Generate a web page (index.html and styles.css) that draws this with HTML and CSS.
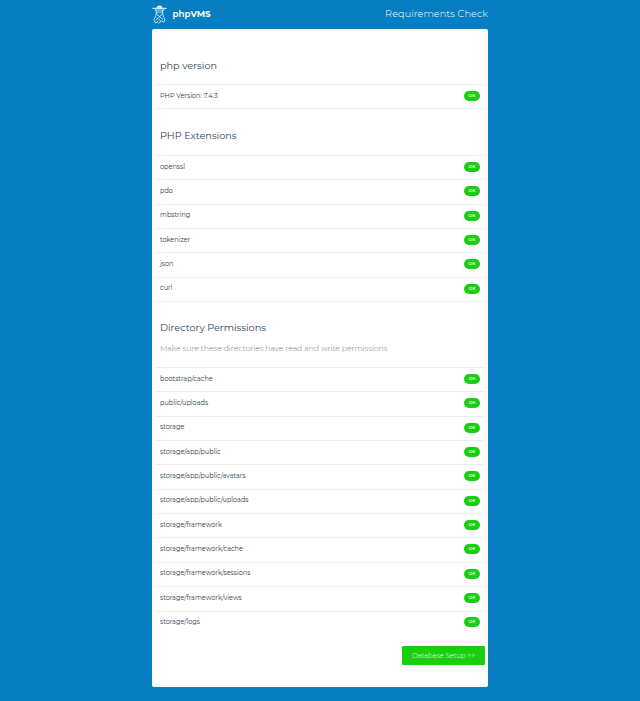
FILE: index.html
```html
<!DOCTYPE html>
<html lang="en">
<head>
  <meta charset="UTF-8">
  <meta name="viewport" content="width=device-width, initial-scale=1.0">
  <title>Requirements Check - phpVMS</title>
  <link rel="stylesheet" href="styles.css">
</head>
<body>
  <header class="navbar">
    <a class="brand" href="#">
      <svg class="logo" viewBox="0 0 16 20" fill="none" stroke="#fff" stroke-width="0.8" stroke-linecap="round" stroke-linejoin="round">
        <path d="M5.4 2.6 L6.4 1 H9.6 L10.6 2.6 Z" fill="#fff" />
        <path d="M0.8 3.4 H15.2" stroke-width="1" />
        <path d="M3.4 5.2 H12.6 M3.6 5.2 L5.2 7.4 H10.8 L12.4 5.2" />
        <path d="M4.6 7.4 L4.2 11.4 L2 15.8 L3.6 19 L6.2 17.6 M11.4 7.4 L11.8 11.4 L13.8 15.4 L12.6 18.2 L10.2 17" />
        <path d="M5 9.4 L11.4 15.2 M11 9.4 L4.6 15.6 M7.2 15 L9.6 17.4 L7.2 19.2" />
      </svg>
      <span class="brand-name">php<b>VMS</b></span>
    </a>
    <p class="page-title">Requirements Check</p>
  </header>
  <main class="card">
    <section class="php-version">
      <h4>php version</h4>
      <table class="table">
        <tr><td>PHP Version: 7.4.3</td><td class="status"><span class="badge">OK</span></td></tr>
      </table>
    </section>

    <section class="extensions">
      <h4>PHP Extensions</h4>
      <table class="table">
        <tr><td>openssl</td><td class="status"><span class="badge">OK</span></td></tr>
        <tr><td>pdo</td><td class="status"><span class="badge">OK</span></td></tr>
        <tr><td>mbstring</td><td class="status"><span class="badge">OK</span></td></tr>
        <tr><td>tokenizer</td><td class="status"><span class="badge">OK</span></td></tr>
        <tr><td>json</td><td class="status"><span class="badge">OK</span></td></tr>
        <tr><td>curl</td><td class="status"><span class="badge">OK</span></td></tr>
      </table>
    </section>

    <section class="directories">
      <h4>Directory Permissions</h4>
      <p class="description">Make sure these directories have read and write permissions</p>
      <table class="table">
        <tr><td>bootstrap/cache</td><td class="status"><span class="badge">OK</span></td></tr>
        <tr><td>public/uploads</td><td class="status"><span class="badge">OK</span></td></tr>
        <tr><td>storage</td><td class="status"><span class="badge">OK</span></td></tr>
        <tr><td>storage/app/public</td><td class="status"><span class="badge">OK</span></td></tr>
        <tr><td>storage/app/public/avatars</td><td class="status"><span class="badge">OK</span></td></tr>
        <tr><td>storage/app/public/uploads</td><td class="status"><span class="badge">OK</span></td></tr>
        <tr><td>storage/framework</td><td class="status"><span class="badge">OK</span></td></tr>
        <tr><td>storage/framework/cache</td><td class="status"><span class="badge">OK</span></td></tr>
        <tr><td>storage/framework/sessions</td><td class="status"><span class="badge">OK</span></td></tr>
        <tr><td>storage/framework/views</td><td class="status"><span class="badge">OK</span></td></tr>
        <tr><td>storage/logs</td><td class="status"><span class="badge">OK</span></td></tr>
      </table>
    </section>

    <div class="actions">
      <a class="button" href="#">Database Setup &gt;&gt;</a>
    </div>
  </main>
</body>
</html>
```

FILE: styles.css
```css
body {
  margin: 0;
  background-color: #067ec1;
  color: #2c3e50;
  font-family: Montserrat, Inter, "Liberation Sans", sans-serif;
}

.navbar {
  display: flex;
  justify-content: space-between;
  align-items: center;
  width: 336px;
  height: 29px;
  margin: 0 auto;
  color: white;
}

.brand {
  display: flex;
  align-items: center;
  color: white;
  text-decoration: none;
}

.logo {
  width: 15px;
  height: 19px;
  margin-right: 5.5px;
}

.brand-name {
  font-size: 8.7px;
  line-height: 10px;
  padding-bottom: 1px;
  font-weight: 600;
}

.brand-name b {
  font-weight: 700;
}

.page-title {
  margin: 0;
  padding-bottom: 2px;
  font-size: 9.7px;
  font-weight: 300;
  letter-spacing: 0.08px;
}

.card {
  box-sizing: border-box;
  width: 336px;
  height: 658px;
  margin: 0 auto;
  padding: 27px 2px 0 3px;
  background-color: white;
  border-radius: 2px;
}

h4 {
  margin: 0;
  padding-left: 5px;
  font-size: 9.7px;
  font-weight: 400;
  line-height: 20px;
  color: #2c3e50;
}

.table {
  width: 100%;
  margin-top: 8px;
  border-collapse: separate;
  border-spacing: 0;
  font-size: 6.5px;
}

.table td {
  box-sizing: border-box;
  height: 24.36px;
  padding: 0 5px 2px;
  border-top: 1px solid #eceeef;
  line-height: 10px;
}

.table .status {
  width: 30px;
  padding: 0 6px 1.4px 0;
}

.php-version .table tr:last-child td,
.extensions .table tr:last-child td {
  height: 25.36px;
  border-bottom: 1px solid #eceeef;
}

.extensions {
  margin-top: 16.6px;
}

.extensions .table {
  margin-top: 9px;
}

.directories {
  margin-top: 16.3px;
}

.description {
  margin: 3.5px 0 11px 5px;
  font-size: 7.65px;
  font-weight: 300;
  line-height: 14px;
  color: #6c8184;
}

.directories .table {
  margin-top: 0;
}

.badge {
  display: block;
  width: 16px;
  height: 10px;
  margin-left: auto;
  border-radius: 5px;
  background-color: #18ce0f;
  color: white;
  font-size: 4.3px;
  font-weight: 600;
  line-height: 10px;
  text-align: center;
}

.actions {
  display: flex;
  justify-content: flex-end;
  margin: 11.5px 1px 0 0;
}

.button {
  width: 83px;
  height: 19px;
  border-radius: 1px;
  background-color: #18ce0f;
  color: white;
  font-size: 6.8px;
  font-weight: 300;
  line-height: 20px;
  text-align: center;
  text-decoration: none;
}
```
